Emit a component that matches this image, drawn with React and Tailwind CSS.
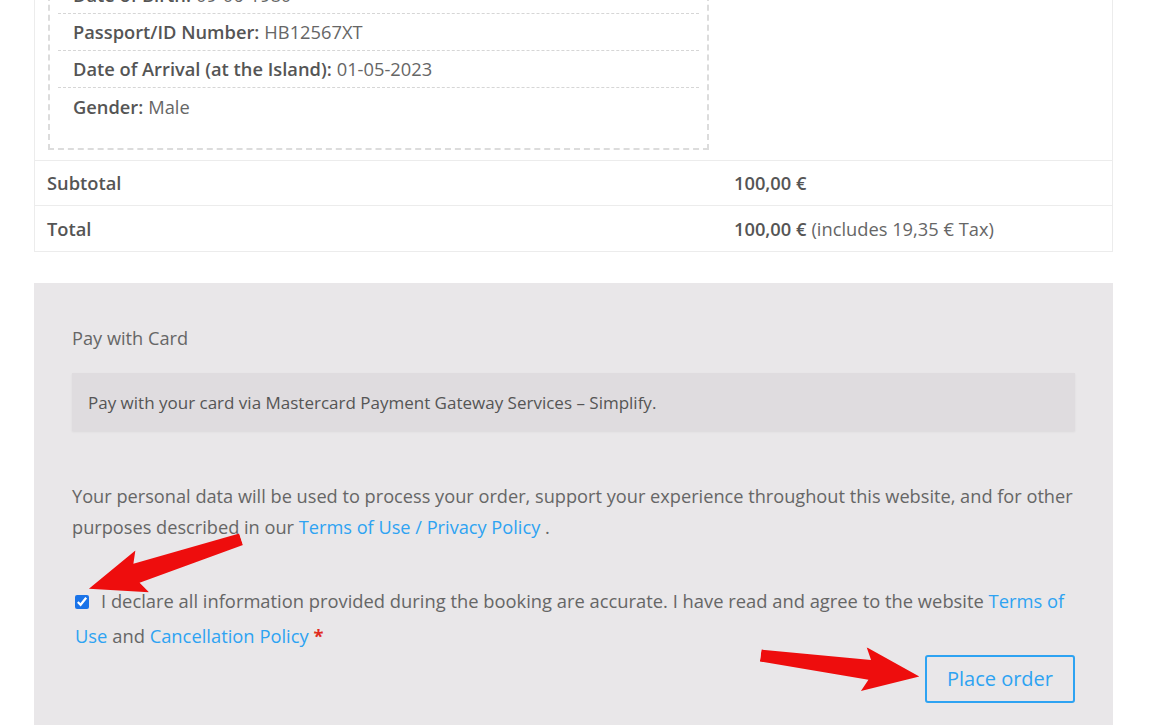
import React from 'react';

const font = { fontFamily: '"Open Sans", "Noto Sans", sans-serif' };

const details = [
  { label: 'Date of Birth:', value: '09-06-1980' },
  { label: 'Passport/ID Number:', value: 'HB12567XT' },
  { label: 'Date of Arrival (at the Island):', value: '01-05-2023' },
  { label: 'Gender:', value: 'Male' },
];

function Arrow({ className, rotate }) {
  return (
    <svg className={className} width="160" height="44" viewBox="0 0 160 44" style={{ transform: `rotate(${rotate}deg)` }}>
      <polygon points="0,16 110,12 104,0 160,22 104,44 110,32 0,28" fill="#ee0d0d" />
    </svg>
  );
}

export default function App() {
  return (
    <div className="relative w-[1172px] h-[725px] overflow-hidden bg-white text-[#666]" style={font}>
      {/* order table */}
      <div className="ml-[34px] w-[1079px] -mt-[35px] border border-[#ececec] border-t-0">
        <div className="flex border-b border-[#ececec]">
          <div className="w-[687px] px-[13px] pt-[10px] pb-[10px]">
            <div className="border-2 border-dashed border-[#dcdcdc] px-[8px] pb-[23px]">
              {details.map((d, i) => (
                <div
                  key={d.label}
                  className={`h-[37px] flex items-center px-[15px] text-[18.3px] ${i < details.length - 1 ? 'border-b border-dashed border-[#d6d6d6]' : ''}`}
                >
                  <span className="font-semibold text-[#555]">{d.label}</span>
                  <span className="ml-[5px]">{d.value}</span>
                </div>
              ))}
            </div>
          </div>
          <div className="flex-1" />
        </div>
        <div className="flex h-[45px] items-center border-b border-[#ececec] text-[18.3px]">
          <div className="w-[687px] pl-[12px] font-semibold text-[#555]">Subtotal</div>
          <div className="pl-[12px] font-semibold text-[#555]">100,00 €</div>
        </div>
        <div className="flex h-[45px] items-center text-[18.3px]">
          <div className="w-[687px] pl-[12px] font-semibold text-[#555]">Total</div>
          <div className="pl-[12px]">
            <span className="font-semibold text-[#555]">100,00 €</span>
            <span className="ml-[5px]">(includes 19,35 € Tax)</span>
          </div>
        </div>
      </div>

      {/* payment */}
      <div className="ml-[34px] mt-[31px] w-[1079px] h-[460px] bg-[#e9e7e9] px-[38px] pt-[42px]">
        <div className="text-[18.2px] text-[#666]">Pay with Card</div>
        <div className="mt-[21px] h-[58px] flex items-center px-[16px] bg-[#dfdcdf] shadow-[0_1px_2px_rgba(0,0,0,0.06)] text-[17px] text-[#555]">
          Pay with your card via Mastercard Payment Gateway Services – Simplify.
        </div>
        <p className="mt-[50px] text-[18.2px] leading-[31px] text-[#666]">
          Your personal data will be used to process your order, support your experience throughout this website, and for other purposes described in our{' '}
          <span className="text-[#2ea3f2]">Terms of Use / Privacy Policy</span> .
        </p>
        <p className="mt-[40px] pl-[3px] text-[18.35px] leading-[35px] text-[#666]">
          <input type="checkbox" defaultChecked className="w-[14px] h-[14px] align-[-1px] mr-[12px] accent-[#1a73e8]" />
          I declare all information provided during the booking are accurate. I have read and agree to the website{' '}
          <span className="text-[#2ea3f2]">Terms of Use</span> and <span className="text-[#2ea3f2]">Cancellation Policy</span>{' '}
          <span className="text-[#e02b20] font-bold">*</span>
        </p>
        <div className="flex justify-end mt-[2px]">
          <button className="w-[150px] h-[48px] border-2 border-[#2ea3f2] rounded-[3px] text-[20px] text-[#2ea3f2]">
            Place order
          </button>
        </div>
      </div>

      {/* annotation arrows */}
      <Arrow className="absolute left-[85px] top-[542px] origin-center" rotate={162} />
      <Arrow className="absolute left-[760px] top-[644px] origin-center" rotate={7.5} />
    </div>
  );
}
